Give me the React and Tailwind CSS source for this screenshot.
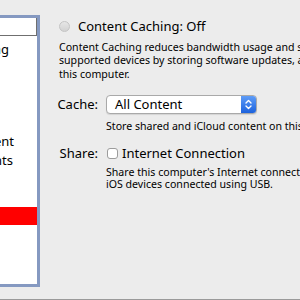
import React from 'react'

const font = { fontFamily: '"Noto Sans", "DejaVu Sans", sans-serif' }

// right padding puts the clipped word endings where the reference shows them
const rows = [
  { text: 'Content Caching', pr: 'pr-[28px]' },
  { text: '', pr: '' },
  { text: '', pr: '' },
  { text: '', pr: '' },
  { text: '', pr: '' },
  { text: 'Content', pr: 'pr-[23px]' },
  { text: 'Accounts', pr: 'pr-[24px]' },
  { text: '', pr: '' },
  { text: '', pr: '' },
  { text: '', pr: '', selected: true },
  { text: '', pr: '' },
]

function ListPane() {
  return (
    <div className="mt-[15px] h-[272px] w-[40px] shrink-0 overflow-hidden border-t-[3px] border-r-[3px] border-b-[3px] border-[#8599c1] bg-white">
      <div className="h-[18px] border-r border-b border-[#6f6f6f]" />
      <div className="pt-[4px]">
        {rows.map((r, i) => (
          <div
            key={i}
            className={`flex h-[18.5px] items-center justify-end overflow-hidden text-[13px] whitespace-nowrap text-black ${r.pr} ${r.selected ? 'bg-[#ff0000]' : ''}`}
          >
            {r.text}
          </div>
        ))}
      </div>
    </div>
  )
}

function Select() {
  return (
    <div className="flex h-[19px] w-[151px] items-stretch overflow-hidden rounded-[4px] border border-[#a9a9a9] bg-white shadow-[0_1px_1px_rgba(0,0,0,0.1)]">
      <div className="flex flex-1 items-center pl-[8px] text-[13px] text-black">All Content</div>
      <div className="flex w-[15px] items-center justify-center bg-gradient-to-b from-[#5e9cf7] to-[#1c62dd]">
        <svg width="7" height="11" viewBox="0 0 7 11" fill="none" stroke="white" strokeWidth="1.4" strokeLinecap="round" strokeLinejoin="round">
          <path d="M1 4 L3.5 1.5 L6 4" />
          <path d="M1 7 L3.5 9.5 L6 7" />
        </svg>
      </div>
    </div>
  )
}

export default function App() {
  return (
    <div className="flex h-[300px] w-[300px] flex-col overflow-hidden bg-[#ececec]" style={font}>
      <div className="flex flex-1">
        <ListPane />
        <div className="flex-1 pt-[19px] pl-[19px] text-black">
          <div className="flex h-[15px] items-center">
            <div className="h-[11px] w-[11px] rounded-full border border-[#c4c4c4] bg-gradient-to-b from-[#e6e6e6] to-[#d2d2d2]" />
            <span className="ml-[8px] text-[13px] whitespace-nowrap">Content Caching: Off</span>
          </div>
          <p className="mt-[7px] text-[10.6px] leading-[13.4px] whitespace-nowrap">
            Content Caching reduces bandwidth usage and speeds up installation on
            <br />
            supported devices by storing software updates, apps, and other content on
            <br />
            this computer.
          </p>
          <div className="mt-[14px] grid grid-cols-[39px_1fr] gap-x-[8px]">
            <div className="flex h-[19px] items-center justify-end text-[13px]">Cache:</div>
            <Select />
            <div />
            <div className="mt-[6px] text-[10.6px] leading-[13px] whitespace-nowrap">
              Store shared and iCloud content on this computer.
            </div>
            <div className="mt-[13px] flex h-[15px] items-center justify-end text-[13px]">Share:</div>
            <div className="mt-[13px] flex h-[15px] items-center">
              <div className="ml-[1px] h-[11px] w-[11px] rounded-[3px] border border-[#9c9c9c] bg-white" />
              <span className="ml-[4px] text-[13px] whitespace-nowrap">Internet Connection</span>
            </div>
            <div />
            <div className="mt-[5px] text-[10.6px] leading-[12px] whitespace-nowrap">
              Share this computer's Internet connection with
              <br />
              iOS devices connected using USB.
            </div>
          </div>
        </div>
      </div>
      <div className="h-px bg-[#9a9a9a]" />
    </div>
  )
}
